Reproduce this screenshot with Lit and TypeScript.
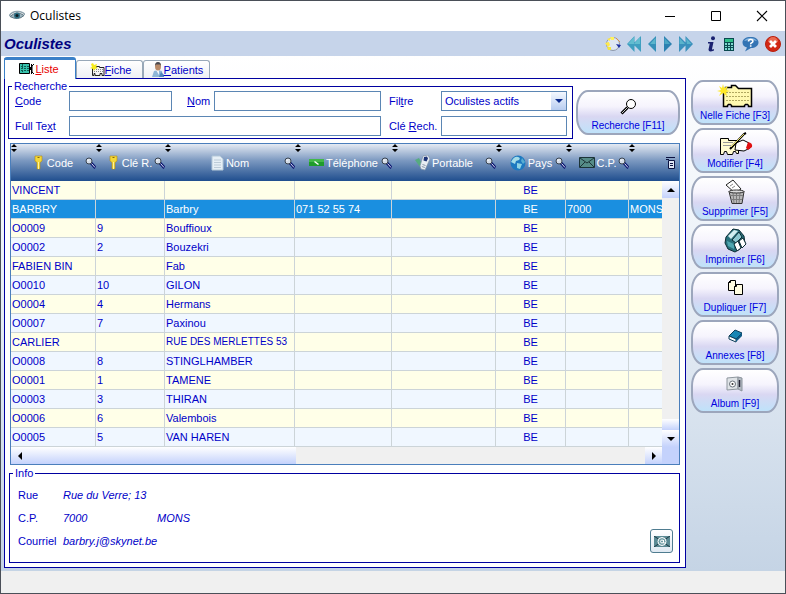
import { LitElement, html, svg, css, nothing } from "lit";
import type { TemplateResult, SVGTemplateResult } from "lit";
import { customElement, property, state } from "lit/decorators.js";
import { classMap } from "lit/directives/class-map.js";

interface Glyph {
  w: number;
  h: number;
  art: SVGTemplateResult;
}

const cardOutline = "M1.5 4.5h3v-2h2v-2h6v2h3v2h14v16h-3v-3h-3v3h-3v3M1.5 4.500v16h3v-2h3v2h10v-2h3v2h9";

const glyphs: Record<string, Glyph> = {
  eye: {
    w: 16, h: 12,
    art: svg`<path d="M0 6Q3 1 9 1.500T16 5" fill="none" stroke="#8fa3ad" stroke-width="1.500"/>
      <path d="M1 6.500Q8 0 15 5.500Q9 11 1 6.500z" fill="#9db4be" stroke="#5c7480"/>
      <circle cx="8" cy="5.500" r="3" fill="#2f6f83"/><circle cx="8" cy="5.500" r="1.500" fill="#0d1c24"/>`,
  },
  cycle: {
    w: 16, h: 16,
    art: svg`<circle cx="8" cy="8" r="6.500" fill="#dfe7f3" stroke="#8d98aa"/>
      <path d="M0 7l4-1 1 3-2 2zM2 3l3-1v3z" fill="#ffe94a"/><path d="M2 11h4v3H3z" fill="#f4e640"/>
      <path d="M5 1h4v3H6z" fill="#fff25c"/><path d="M11 8l5 1-2 3z" fill="#1d2f9e"/>
      <path d="M11 2l4 4" stroke="#d8924e"/>`,
  },
  first: {
    w: 14, h: 16,
    art: svg`<path d="M7.500 0v16L0 8zM14 0v16L6 8z" fill="#3f9fc0"/><path d="M7 1L1 8h6zM13 1L7 8h6z" fill="#62bdd0"/>`,
  },
  prev: {
    w: 10, h: 16,
    art: svg`<path d="M9 0v16L1 8z" fill="#3590b8"/><path d="M8.500 2L3 8h5.500z" fill="#5bb6cc"/>`,
  },
  next: {
    w: 10, h: 16,
    art: svg`<path d="M1 0v16l8-8z" fill="#2b80b0"/><path d="M1.500 2L7 8H1.500z" fill="#4aa6c4"/>`,
  },
  last: {
    w: 14, h: 16,
    art: svg`<path d="M0 0v16l8-8zM6.500 0v16L14 8z" fill="#3a90bc"/><path d="M.5 2L6 8H.5zM7 2l5.500 6H8z" fill="#5bb4cc"/>`,
  },
  info: {
    w: 10, h: 16,
    art: svg`<circle cx="7" cy="2.300" r="2" fill="#1a2270"/>
      <path d="M2 6h5.500L6 13q0 1 2 0v1.500Q2.500 17 2.500 13.500L3.800 7.500H2z" fill="#1a2270"/>`,
  },
  calc: {
    w: 14, h: 16,
    art: svg`<path d="M2 2h10v13H2z" fill="#0b4a50"/><path d="M3 3h8v3H3z" fill="#2fbf88"/>
      <path d="M3 7h2v2H3zM6 7h2v2H6zM9 7h2v2H9zM3 10h2v1H3zM6 10h2v1H6zM9 10h2v1H9zM3 12h2v2H3zM6 12h2v2H6zM9 12h2v2H9z" fill="#7fd8d0"/>`,
  },
  help: {
    w: 17, h: 16,
    art: svg`<path d="M8.500 1c5 0 8 2 8 5.500S13 12 9 12l-6 3.500L5 11.500C2 11 .5 9 .5 6.500.5 3 4 1 8.500 1z" fill="#3474b4"/>
      <path d="M2 5q2-3 6.500-3T15 5q-6-2-13 0z" fill="#86b6e0"/>
      <path d="M6.500 5.500q0-2 2.200-2t2.200 1.800q0 1-1.200 1.500t-1 1.500M8.700 9.200v1.600" fill="none" stroke="#fff" stroke-width="1.600"/>`,
  },
  quit: {
    w: 16, h: 16,
    art: svg`<circle cx="8" cy="8" r="7.500" fill="#d22814" stroke="#b8200f"/>
      <path d="M3 6a5 5 0 0110 0z" fill="#ea6a52"/>
      <path d="M5 5l6 6M11 5l-6 6" stroke="#fff" stroke-width="2.800"/>`,
  },
  minimize: { w: 12, h: 12, art: svg`<path d="M1 6.500h10" stroke="#000"/>` },
  maximize: { w: 12, h: 12, art: svg`<path d="M1.500 1.500h9v9h-9z" fill="none" stroke="#000"/>` },
  close: { w: 12, h: 12, art: svg`<path d="M1 1l10 10M11 1L1 11" stroke="#000" stroke-width="1.100"/>` },
  list: {
    w: 16, h: 12,
    art: svg`<path d="M.5.500h10v10H.5z" fill="#37c2ac" stroke="#000"/><path d="M2 3.500h8M2 5.500h8M2 7.500h8M3.500 1v9" stroke="#0d5a50" stroke-dasharray="2 1"/>
      <path d="M12.500 1v10M15 1l-2 2v6l2 2" fill="none" stroke="#000"/><path d="M10 4h2v3h-2z"/>`,
  },
  card: {
    w: 15, h: 14,
    art: svg`<path d="M2.500 4.500h4v-1h3v1h4.500v8h-2v-2h-2v2h-5v-2h-1v2h-1.500z" fill="#f4f4f4" stroke="#222"/>
      <path d="M4 6.500h9M4 8.500h9" stroke="#888" stroke-dasharray="1 1"/><path d="M3 0l1 2 3-1-1 3 2 1-3 1-1 2-1-2-3-1 2-1-1-3z" fill="#f6ec1e"/>`,
  },
  patient: {
    w: 12, h: 16,
    art: svg`<path d="M0 15l2-6 4-1 4 1 1 6z" fill="#8fb6d8"/><path d="M4 8h3v5z" fill="#f3f6fa"/>
      <path d="M9 10l3 3v2H7z" fill="#4f86bd"/><ellipse cx="6" cy="4.500" rx="3" ry="4" fill="#b98a68"/><path d="M3 4Q3 0 6 0t3 4L8 2.500H4z" fill="#4b4a50"/>`,
  },
  lens: {
    w: 17, h: 17,
    art: svg`<circle cx="11" cy="6" r="4.500" fill="#fff" stroke="#000"/><path d="M7.500 9.500L1.500 15.500" stroke="#000" stroke-width="3"/><path d="M7.500 9.500L2 15" stroke="#ccc"/>`,
  },
  newCard: {
    w: 36, h: 24,
    art: svg`<path d="M6.500 5.500h2v-2h6v-2h4l3 3h13v18h-3v-1l-1-1h-2l-1 1v1h-13v-1l-1-1h-2l-1 1v1h-4z" fill="#fff9b0" stroke="#000" stroke-width="1.500"/>
      <path d="M9 8.500h23M9 12.500h23M9 16.500h23" stroke="#b0a860" stroke-dasharray="2 1"/>
      <path d="M6 0l1 4 4-2-2 4 4 1-4 1 1 4-4-3-4 3 2-4-4-1 4-1-2-4 3 2z" fill="#ffe928"/>`,
  },
  editCard: {
    w: 36, h: 24,
    art: svg`<path d="M3.500 6.500h8v2h10v13h-2l-1-2h-2l-1 3h-5l-1-3h-2l-1 3h-3z" fill="#fffbd0" stroke="#000"/>
      <path d="M6 10.500h10M6 13.500h8" stroke="#999"/>
      <path d="M19 11l7-3 6 3 1 5-6 3-9-1z" fill="#fff" stroke="#000"/>
      <path d="M31 10q5 1 4 5l-4 3-2-2z" fill="#e01010"/>
      <path d="M13 17L27 2l2-1" fill="none" stroke="#000" stroke-width="2"/><path d="M14 15L27 2" stroke="#e8e060"/>`,
  },
  trash: {
    w: 20, h: 26,
    art: svg`<path d="M1 6l7-5 8 9-6 4z" fill="#fff" stroke="#222"/><path d="M5 7l3-2M7 9l3-2" stroke="#888"/>
      <path d="M4 12.500h15l-2 12H7z" fill="#b8b8b8" stroke="#333"/><path d="M8 14l1 10M11.500 14v10M15 14l-1 10M5 16.500h13M6 20.500h11" stroke="#7c7c7c"/>
      <ellipse cx="11.500" cy="12.500" rx="7.500" ry="1.500" fill="#ddd" stroke="#333"/>`,
  },
  printer: {
    w: 23, h: 25,
    art: svg`<path d="M2 9L9 1l6 1 5 6 1 8-5 5-5 3-7-3-3-6z" fill="#28717c" stroke="#0a2a33"/>
      <path d="M4 8l6-6 4 1-7 8z" fill="#d4eef0"/><path d="M8 12l7-8 3 5-6 6z" fill="#8cc8d0" stroke="#0a2a33"/>
      <path d="M3 13l7 3v5l-6-3z" fill="#4fa7b0"/>
      <path d="M10 16l4-3 3 7-4 3zM15 13l4-3 3 6-4 4z" fill="#fff" stroke="#0a2a33"/>`,
  },
  copy: {
    w: 17, h: 18,
    art: svg`<path d="M1.500 3.500l2-2h5v10h-7z" fill="#fffce0" stroke="#000"/><path d="M1.500 3.500h2v-2" fill="none" stroke="#000"/>
      <path d="M7.500 7.500l2-2h6v10h-8z" fill="#fffce0" stroke="#000"/><path d="M7.500 7.500h2v-2" fill="none" stroke="#000"/>`,
  },
  book: {
    w: 15, h: 14,
    art: svg`<path d="M1 7l6-6 7 3-6 6z" fill="#1a86b4" stroke="#0c3c58"/><path d="M1 7v3l7 3v-3z" fill="#fff" stroke="#0c3c58"/><path d="M8 10l6-6v3l-6 6z" fill="#0f5a86"/>`,
  },
  album: {
    w: 18, h: 18,
    art: svg`<path d="M1 3l11-1v12l-11 1z" fill="#dfe3e7" stroke="#8e969e"/><circle cx="6.500" cy="9" r="3" fill="#fff" stroke="#6b737b"/><circle cx="6.500" cy="9" r="1" fill="#333"/>
      <path d="M12 2l4 1v13l-4-2z" fill="#b4bbc3" stroke="#8b939b"/><path d="M13.500 5v7" stroke="#223" stroke-width="1.500"/>`,
  },
  key: {
    w: 11, h: 15,
    art: svg`<path d="M1 1h7v5L6 7.500V14H3V7.500L1 6z" fill="#f4d838" stroke="#b08a18" stroke-width=".6"/><path d="M3.500 2.500h2" stroke="#8a6a10"/><path d="M4.500 7v7" stroke="#fff5a0"/>`,
  },
  sheet: {
    w: 13, h: 16,
    art: svg`<path d="M1 1h8l3 3v11H1z" fill="#e6eff6" stroke="#b4c8d8"/><path d="M3 5h7M3 7.500h7M3 10h7M3 12.500h7" stroke="#bccbd8"/>`,
  },
  phone: {
    w: 15, h: 9,
    art: svg`<path d="M0 1h15v7H0z" fill="#1f9c2c"/><path d="M0 1h15v3H0z" fill="#42b848"/><path d="M5.500 3.500l4 3" stroke="#fff" stroke-width="1.500"/>`,
  },
  mobile: {
    w: 15, h: 16,
    art: svg`<path d="M0 5l4-2 3 6-2 3z" fill="#56ab80"/><path d="M8 1l5-1 2 4-5 11-4-1-1-3z" fill="#e8edf3" stroke="#7f92a8" stroke-width=".7"/><path d="M9 2l3-.5 1 2-1.500 3-3-1z" fill="#1c3478"/><path d="M7.500 9.500l3 1M6.800 11.500l3 1" stroke="#8a98aa"/>`,
  },
  globe: {
    w: 16, h: 16,
    art: svg`<circle cx="8" cy="8" r="7.500" fill="#1d79c0"/><path d="M1 7q3-6 7-5 3 1 1 3L6 6l-1 3z" fill="#a4dce8"/><path d="M7 8l5 1-2 5-3-1z" fill="#8fd4e4"/><path d="M12 3l3 4-2 2-2-3z" fill="#58aed2"/>`,
  },
  envelope: {
    w: 16, h: 11,
    art: svg`<path d="M.5.500h15v10H.5z" fill="#568c88" stroke="#1c3438"/><path d="M1 1l7 5 7-5M1 10l5-5M15 10l-5-5" fill="none" stroke="#1c3438"/>`,
  },
  mail: {
    w: 16, h: 11,
    art: svg`<path d="M0 0h16v11H0z" fill="#5b8a94"/><path d="M0 0l16 11M16 0L0 11" stroke="#1c3a44"/><circle cx="8" cy="5.500" r="4" fill="#6f9ca4" stroke="#fff"/><circle cx="8" cy="5.500" r="1.500" fill="none" stroke="#fff"/><path d="M9.500 4v3h2" fill="none" stroke="#fff"/>`,
  },
  find: {
    w: 11, h: 12,
    art: svg`<path d="M6 6l4.500 5" stroke="#0a1470" stroke-width="3"/><path d="M6.500 6.500l3.500 4" stroke="#dfe6f4"/>
      <circle cx="4" cy="4" r="3" fill="#d4dce8" stroke="#38424e"/><path d="M2.500 4l1.500-1.500" stroke="#fff"/>`,
  },
  sort: { w: 6, h: 8, art: svg`<path d="M3 0l3 3H0zM3 8l3-3H0z" fill="#000"/>` },
  columns: {
    w: 11, h: 13,
    art: svg`<path d="M3.500 4.500h6v8h-6z" fill="#dfe6f4" stroke="#0b1240"/><path d="M1 1.500h9M1 3.500h3M5 7.500h3M5 9.500h3" fill="none" stroke="#0b1240"/>`,
  },
  up: { w: 8, h: 4, art: svg`<path d="M4 0l4 4H0z"/>` },
  down: { w: 8, h: 4, art: svg`<path d="M0 0h8L4 4z"/>` },
  left: { w: 4, h: 8, art: svg`<path d="M4 0v8L0 4z"/>` },
  right: { w: 4, h: 8, art: svg`<path d="M0 0v8l4-4z"/>` },
};

function icon(name: string): TemplateResult {
  const g = glyphs[name];
  return html`<svg class="icon" width=${g.w} height=${g.h} viewBox="0 0 ${g.w} ${g.h}" aria-hidden="true">${g.art}</svg>`;
}

const base = css`
  * {
    box-sizing: border-box;
  }
  button,
  input,
  select {
    font: inherit;
    color: inherit;
    margin: 0;
    padding: 0;
    border: 0;
    background: none;
  }
  .icon {
    display: block;
    flex: none;
  }
`;

@customElement("pill-button")
export class PillButton extends LitElement {
  @property() icon = "";
  @property() label = "";

  static styles = [
    base,
    css`
      :host {
        display: block;
      }
      .pill {
        display: flex;
        flex-direction: column;
        align-items: center;
        width: 100%;
        height: 45px;
        padding-bottom: 1px;
        border: 2px solid #9ca6bc;
        border-radius: 12px / 18px;
        background: linear-gradient(#ffffff, #f6f4fd 35%, #d9d7f2 60%, #bfe2fa);
        font-size: 10px;
        line-height: 12px;
        color: #0000e0;
      }
      .art {
        flex: 1;
        display: flex;
        align-items: center;
      }
    `,
  ];

  render() {
    return html`<button class="pill"><span class="art">${icon(this.icon)}</span><span>${this.label}</span></button>`;
  }
}

interface Row {
  code: string;
  cle?: string;
  nom?: string;
  tel?: string;
  cp?: string;
  ville?: string;
}

@customElement("record-table")
export class RecordTable extends LitElement {
  @property({ attribute: false }) rows: Row[] = [];
  @state() private selected = 1;

  static styles = [
    base,
    css`
      :host {
        display: block;
        border: 1px solid #4a7ebb;
      }
      .grid {
        width: 100%;
        table-layout: fixed;
        border-collapse: separate;
        border-spacing: 0;
      }
      .w-code { width: 85px; }
      .w-cle { width: 69px; }
      .w-nom { width: 130px; }
      .w-tel { width: 97px; }
      .w-port { width: 104px; }
      .w-pays { width: 70px; }
      .w-cp { width: 63px; }
      .w-bar { width: 17px; }
      .grid thead {
        background: linear-gradient(#e4eaf3, #7b98c0 45%, #1f4e8e);
      }
      .grid th {
        height: 37px;
        padding: 0;
        font-weight: normal;
        color: #ffffff;
      }
      .head {
        display: grid;
        height: 37px;
      }
      .head > * {
        grid-area: 1 / 1;
      }
      .sort {
        justify-self: start;
      }
      .title {
        place-self: center;
        display: flex;
        align-items: center;
        gap: 2px;
        white-space: nowrap;
      }
      .find {
        place-self: center end;
      }
      .grid td {
        height: 19px;
        padding: 0 0 0 1px;
        border-right: 1px solid #ccd4d8;
        border-bottom: 1px solid #ccd4d8;
        line-height: 18px;
        white-space: nowrap;
      }
      .grid .mid {
        padding: 0;
        text-align: center;
      }
      .grid .long {
        font-size: 10px;
      }
      .row {
        background: #f0f7ff;
      }
      .row:nth-child(odd) {
        background: #ffffe8;
      }
      .grid .row.on {
        background: #1a8fe0;
        color: #ffffff;
      }
      .grid .edge {
        border-right: 0;
      }
      .grid .vbar {
        height: auto;
        padding: 0;
        border: 0;
        background: #f0f0f0;
        color: #000000;
      }
      .track {
        display: flex;
        flex-direction: column;
        height: 266px;
      }
      .step {
        display: flex;
        align-items: center;
        justify-content: center;
        width: 17px;
        height: 17px;
        background: linear-gradient(#ffffff, #c4d2fc);
      }
      .space {
        flex: 1;
      }
      .thumb {
        height: 11px;
        background: linear-gradient(#ffffff, #c4d2fc);
      }
      .hbar {
        display: flex;
        height: 17px;
        background: #f0f0f0;
      }
      .hthumb {
        display: flex;
        flex: 285 0 0;
        background: linear-gradient(#ffffff, #c4d2fc);
      }
      .hthumb .step {
        background: none;
      }
      .hspace {
        flex: 349 0 0;
      }
      .corner {
        width: 17px;
        background: #c4d2fc;
      }
    `,
  ];

  private head(glyph: string, label: string) {
    return html`<th scope="col">
      <div class="head">
        <span class="sort">${icon("sort")}</span>
        <span class="title">${icon(glyph)}${label}</span>
        <button class="find" aria-label="Rechercher ${label}">${icon("find")}</button>
      </div>
    </th>`;
  }

  render() {
    return html`
      <table class="grid">
        <colgroup>
          <col class="w-code" /><col class="w-cle" /><col class="w-nom" /><col class="w-tel" />
          <col class="w-port" /><col class="w-pays" /><col class="w-cp" /><col /><col class="w-bar" />
        </colgroup>
        <thead>
          <tr>
            ${this.head("key", "Code")} ${this.head("key", "Clé R.")} ${this.head("sheet", "Nom")}
            ${this.head("phone", "Téléphone")} ${this.head("mobile", "Portable")} ${this.head("globe", "Pays")}
            ${this.head("envelope", "C.P.")}
            <th scope="col" aria-label="Localité"><div class="head"><span class="sort">${icon("sort")}</span></div></th>
            <th><div class="head"><button class="title" aria-label="Colonnes">${icon("columns")}</button></div></th>
          </tr>
        </thead>
        <tbody>
          ${this.rows.map(
            (r, i) => html`<tr class=${classMap({ row: true, on: i === this.selected })} @click=${() => (this.selected = i)}>
              <td>${r.code}</td>
              <td>${r.cle}</td>
              <td class=${classMap({ long: (r.nom ?? "").length > 16 })}>${r.nom}</td>
              <td>${r.tel}</td>
              <td></td>
              <td class="mid">BE</td>
              <td>${r.cp}</td>
              <td class="edge">${r.ville}</td>
              ${i === 0
                ? html`<td class="vbar" rowspan=${this.rows.length}>
                    <div class="track">
                      <button class="step" aria-label="Monter">${icon("up")}</button>
                      <div class="space"></div>
                      <div class="thumb"></div>
                      <button class="step" aria-label="Descendre">${icon("down")}</button>
                    </div>
                  </td>`
                : nothing}
            </tr>`
          )}
        </tbody>
      </table>
      <div class="hbar">
        <div class="hthumb"><button class="step" aria-label="Gauche">${icon("left")}</button></div>
        <div class="hspace"></div>
        <button class="step" aria-label="Droite">${icon("right")}</button>
        <div class="corner"></div>
      </div>
    `;
  }
}

@customElement("app-root")
export class AppRoot extends LitElement {
  private rows: Row[] = [
    { code: "VINCENT" },
    { code: "BARBRY", nom: "Barbry", tel: "071 52 55 74", cp: "7000", ville: "MONS" },
    { code: "O0009", cle: "9", nom: "Bouffioux" },
    { code: "O0002", cle: "2", nom: "Bouzekri" },
    { code: "FABIEN BIN", nom: "Fab" },
    { code: "O0010", cle: "10", nom: "GILON" },
    { code: "O0004", cle: "4", nom: "Hermans" },
    { code: "O0007", cle: "7", nom: "Paxinou" },
    { code: "CARLIER", nom: "RUE DES MERLETTES 53" },
    { code: "O0008", cle: "8", nom: "STINGLHAMBER" },
    { code: "O0001", cle: "1", nom: "TAMENE" },
    { code: "O0003", cle: "3", nom: "THIRAN" },
    { code: "O0006", cle: "6", nom: "Valembois" },
    { code: "O0005", cle: "5", nom: "VAN HAREN" },
  ];

  private actions = [
    ["newCard", "Nelle Fiche [F3]"],
    ["editCard", "Modifier [F4]"],
    ["trash", "Supprimer [F5]"],
    ["printer", "Imprimer [F6]"],
    ["copy", "Dupliquer [F7]"],
    ["book", "Annexes [F8]"],
    ["album", "Album [F9]"],
  ];

  static styles = [
    base,
    css`
      :host {
        display: flex;
        flex-direction: column;
        min-height: 100vh;
        box-sizing: border-box;
        border: 1px solid #4a4f58;
        background: #ffffff;
        font: 11px/12px "Liberation Sans", Arial, sans-serif;
        color: #0000c8;
      }
      u {
        text-underline-offset: 1px;
      }
      .titlebar {
        display: flex;
        align-items: center;
        height: 30px;
        padding: 0 3px 0 8px;
        gap: 5px;
        font: 12px/16px "Open Sans", "Noto Sans", sans-serif;
        color: #000000;
      }
      .titlebar .name {
        flex: 1;
      }
      .win {
        display: flex;
        align-items: center;
        justify-content: center;
        width: 41px;
        height: 30px;
      }
      .band {
        display: flex;
        align-items: center;
        justify-content: space-between;
        height: 25px;
        padding: 0 4px 0 3px;
        background: #c6d4ea;
      }
      .heading {
        margin: 0;
        font: italic bold 15px/20px "Liberation Sans", Arial, sans-serif;
        color: #000080;
      }
      .tools {
        display: flex;
        align-items: center;
        gap: 6px;
      }
      .tools .group {
        margin-left: 7px;
      }
      .body {
        flex: 1;
        display: flex;
        align-items: stretch;
        gap: 5px;
        padding: 1px 6px 3px 3px;
        background: linear-gradient(#ffffff, #eef3f9 35%, #c5d4e5);
      }
      .main {
        flex: 1;
        min-width: 0;
        display: flex;
        flex-direction: column;
      }
      .tabs {
        display: flex;
        align-items: flex-end;
        height: 21px;
      }
      .tab {
        display: flex;
        align-items: center;
        justify-content: center;
        width: 67px;
        height: 18px;
        padding-left: 2px;
        border: 1px solid #98a8b8;
        border-bottom: 0;
        border-radius: 3px 3px 0 0;
        background: linear-gradient(#ffffff, #eef0f4);
      }
      .tab.on {
        width: 72px;
        height: 22px;
        margin-bottom: -1px;
        padding: 0 2px 2px 0;
        border: 1px solid #3a80c8;
        border-top-width: 3px;
        border-bottom: 0;
        background: #ffffff;
        color: #e80000;
        z-index: 1;
      }
      .panel {
        flex: 1;
        padding: 2px 5px 4px 3px;
        border: 1px solid #0000a0;
        background: #ffffff;
      }
      .group-box {
        min-width: 0;
        margin: 0;
        padding: 0;
        border: 1px solid #0000a0;
      }
      .group-box legend {
        margin-left: 3px;
        padding: 0 2px;
        line-height: 10px;
      }
      .search {
        display: flex;
        align-items: flex-end;
        gap: 3px;
      }
      .criteria {
        flex: 1;
      }
      .fields {
        display: grid;
        grid-template-columns: 54px 103px 42px 1fr 60px 126px;
        row-gap: 5px;
        margin: 0 5px 2px 6px;
      }
      .fields label {
        align-self: center;
      }
      .second {
        padding-left: 15px;
      }
      .third {
        padding-left: 8px;
      }
      .field {
        width: 100%;
        min-width: 0;
        height: 20px;
        border: 1px solid #5b86b4;
        background: #ffffff;
      }
      .wide {
        grid-column: 2 / 5;
      }
      .choice {
        display: grid;
      }
      .choice > * {
        grid-area: 1 / 1;
      }
      .choice select {
        appearance: none;
        padding-left: 3px;
      }
      .drop {
        place-self: center end;
        display: flex;
        align-items: center;
        justify-content: center;
        width: 15px;
        height: 18px;
        margin-right: 1px;
        background: linear-gradient(#f4f8ff, #b8cdf0);
        fill: #0a2a8c;
        pointer-events: none;
      }
      .go {
        width: 104px;
        margin-bottom: 4px;
      }
      record-table {
        margin: 4px 0 3px 2px;
      }
      .group-box.details {
        display: flex;
        align-items: flex-end;
        justify-content: space-between;
        margin-left: 1px;
        padding: 6px 6px 9px 0;
      }
      .facts {
        display: grid;
        grid-template-columns: 45px 94px 1fr;
        margin: 0 0 0 8px;
        line-height: 23px;
      }
      .facts dd {
        margin: 0;
        font-style: italic;
        white-space: nowrap;
      }
      .facts .full {
        grid-column: 2 / 4;
      }
      .mail {
        display: flex;
        align-items: center;
        justify-content: center;
        width: 23px;
        height: 24px;
        border: 1px solid #4f7c90;
        border-radius: 3px;
        background: linear-gradient(#ffffff, #dfe9f2);
      }
      .side {
        display: flex;
        flex-direction: column;
        gap: 3px;
        width: 88px;
        padding-top: 23px;
      }
      .status {
        height: 22px;
        background: #f0f0f0;
      }
    `,
  ];

  private tool(name: string, label: string, group = false) {
    return html`<button class=${classMap({ group })} aria-label=${label}>${icon(name)}</button>`;
  }

  render() {
    return html`
      <header class="titlebar">
        ${icon("eye")}<span class="name">Oculistes</span>
        <button class="win" aria-label="Réduire">${icon("minimize")}</button>
        <button class="win" aria-label="Agrandir">${icon("maximize")}</button>
        <button class="win" aria-label="Fermer la fenêtre">${icon("close")}</button>
      </header>
      <div class="band">
        <h1 class="heading">Oculistes</h1>
        <div class="tools">
          ${this.tool("cycle", "Actualiser")} ${this.tool("first", "Premier")} ${this.tool("prev", "Précédent")}
          ${this.tool("next", "Suivant")} ${this.tool("last", "Dernier")} ${this.tool("info", "Informations", true)}
          ${this.tool("calc", "Calculatrice")} ${this.tool("help", "Aide")} ${this.tool("quit", "Fermer")}
        </div>
      </div>
      <div class="body">
        <main class="main">
          <nav class="tabs">
            <button class="tab on">${icon("list")}<span><u>L</u>iste</span></button>
            <button class="tab">${icon("card")}<span><u>F</u>iche</span></button>
            <button class="tab">${icon("patient")}<span><u>P</u>atients</span></button>
          </nav>
          <section class="panel">
            <div class="search">
              <fieldset class="group-box criteria">
                <legend>Recherche</legend>
                <div class="fields">
                  <label for="code"><u>C</u>ode</label>
                  <input class="field" id="code" type="text" />
                  <label class="second" for="nom"><u>N</u>om</label>
                  <input class="field" id="nom" type="text" />
                  <label class="third" for="filtre">Fil<u>t</u>re</label>
                  <div class="choice">
                    <select class="field" id="filtre">
                      <option>Oculistes actifs</option>
                    </select>
                    <span class="drop">${icon("down")}</span>
                  </div>
                  <label for="full">Full Te<u>x</u>t</label>
                  <input class="field wide" id="full" type="text" />
                  <label class="third" for="cle">Clé <u>R</u>ech.</label>
                  <input class="field" id="cle" type="text" />
                </div>
              </fieldset>
              <pill-button class="go" icon="lens" label="Recherche [F11]"></pill-button>
            </div>
            <record-table .rows=${this.rows}></record-table>
            <fieldset class="group-box details">
              <legend>Info</legend>
              <dl class="facts">
                <dt>Rue</dt>
                <dd class="full">Rue du Verre; 13</dd>
                <dt>C.P.</dt>
                <dd>7000</dd>
                <dd>MONS</dd>
                <dt>Courriel</dt>
                <dd class="full">barbry.j@skynet.be</dd>
              </dl>
              <button class="mail" aria-label="Envoyer un courriel">${icon("mail")}</button>
            </fieldset>
          </section>
        </main>
        <aside class="side">
          ${this.actions.map(([glyph, label]) => html`<pill-button icon=${glyph} label=${label}></pill-button>`)}
        </aside>
      </div>
      <footer class="status"></footer>
    `;
  }
}
